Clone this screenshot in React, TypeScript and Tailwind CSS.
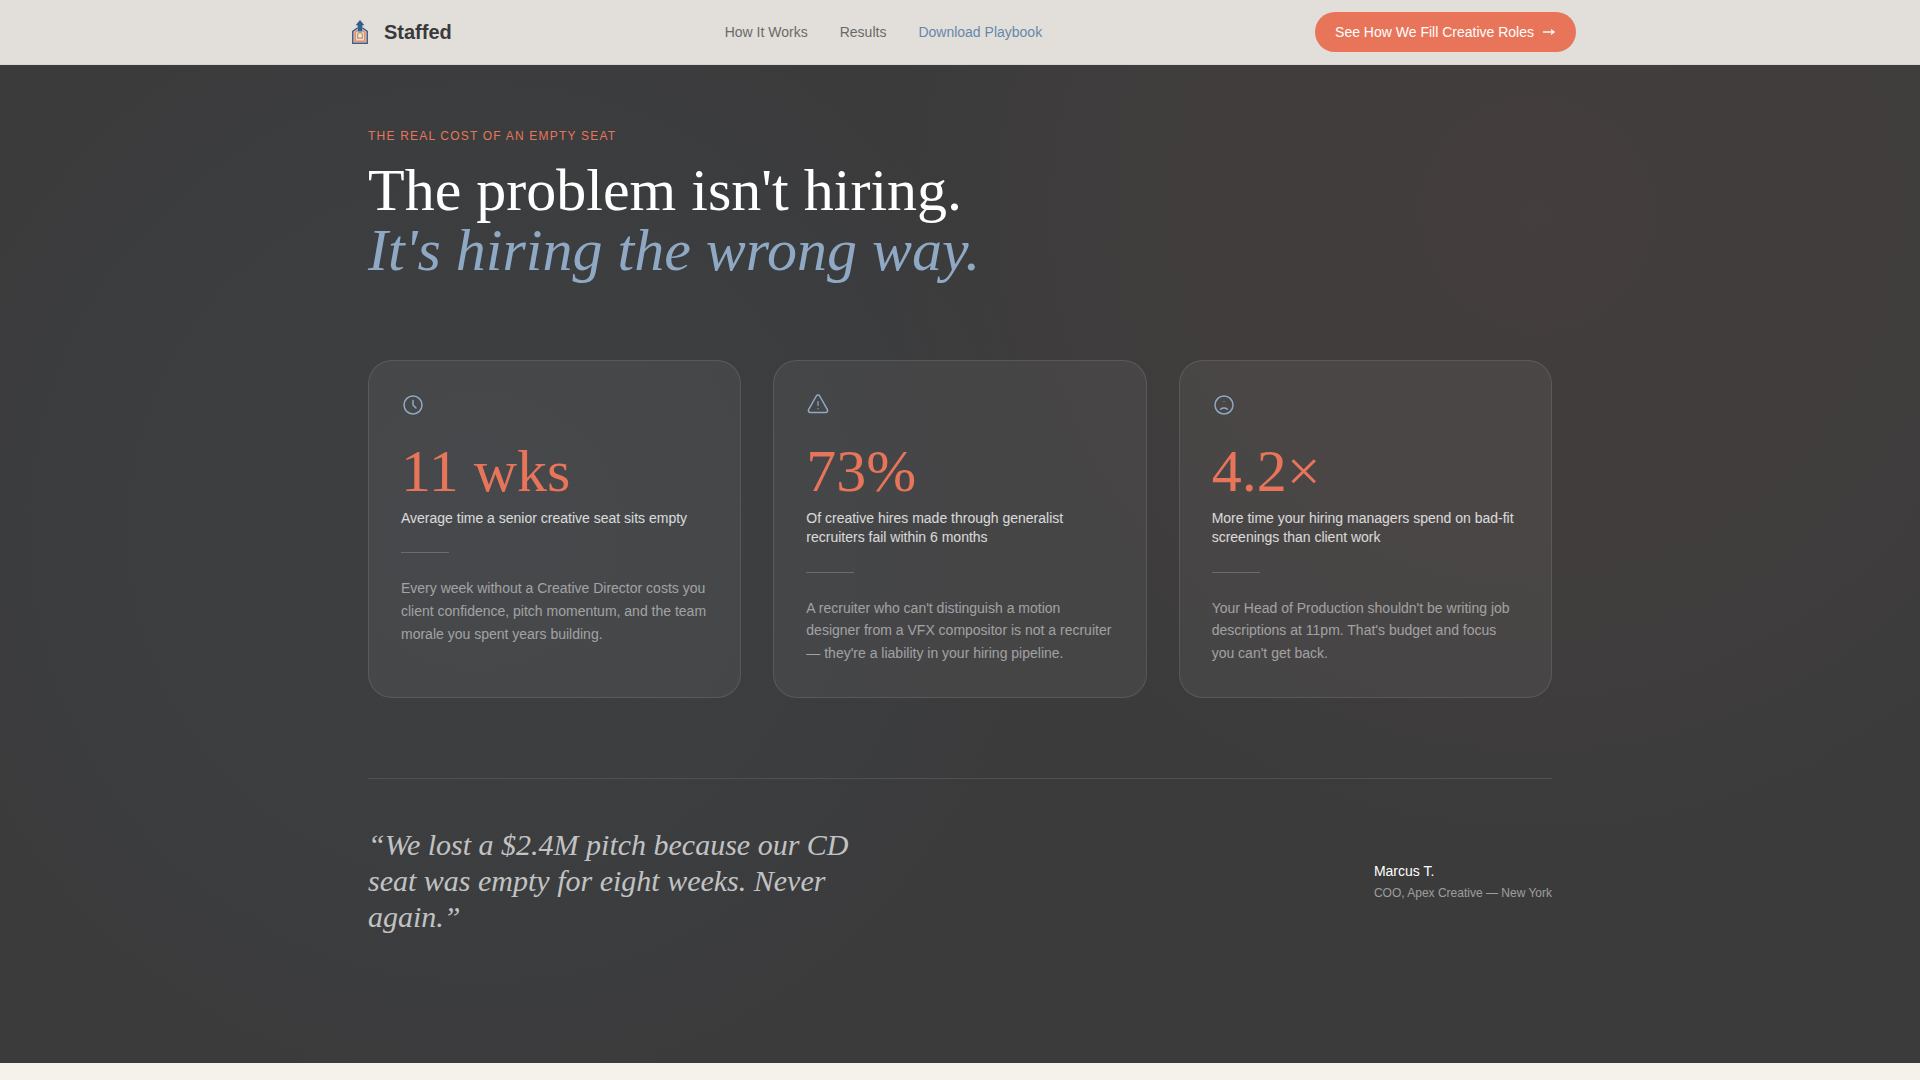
import type { ReactNode } from 'react';

const serif = "font-['Liberation_Serif',serif]";

function Logo() {
  return (
    <svg viewBox="0 0 32 32" className="size-8" aria-hidden="true">
      <path d="M13.4 12 8.8 15.3V27.3h14.4V15.3L18.6 12" fill="none" stroke="#46597a" strokeWidth="1.5" />
      <path d="M13.2 14.6 11.2 16.4v8.8h9.6v-8.8l-2-1.8" fill="none" stroke="#e58a72" strokeWidth="1.6" />
      <path d="M13.6 22.2v-3.9l1.3-1.6h2.2l1.3 1.6v3.9z" fill="#f1e6d6" stroke="#c2955c" strokeWidth="1.2" />
      <path d="M16 4 20.4 9.2h-2v6.2H13.6V9.2h-2z" fill="#33608a" />
    </svg>
  );
}

function StatIcon({ children }: { children: ReactNode }) {
  return (
    <svg
      viewBox="0 0 24 24"
      className="size-6 text-[#8fa9c4]"
      fill="none"
      stroke="currentColor"
      strokeWidth="1.5"
      strokeLinecap="round"
      strokeLinejoin="round"
      aria-hidden="true"
    >
      {children}
    </svg>
  );
}

const stats = [
  {
    value: '11 wks',
    label: 'Average time a senior creative seat sits empty',
    body: 'Every week without a Creative Director costs you client confidence, pitch momentum, and the team morale you spent years building.',
    icon: (
      <>
        <circle cx="12" cy="12" r="9" />
        <path d="M12 7.5V12l3 3" />
      </>
    ),
  },
  {
    value: '73%',
    label: 'Of creative hires made through generalist recruiters fail within 6 months',
    body: "A recruiter who can't distinguish a motion designer from a VFX compositor is not a recruiter — they're a liability in your hiring pipeline.",
    icon: (
      <>
        <path d="M10.3 3 2.6 16.6A1.9 1.9 0 0 0 4.3 19.4h15.4a1.9 1.9 0 0 0 1.7-2.8L13.7 3a2 2 0 0 0-3.4 0z" />
        <path d="M12 8.6v3.8M12 15.7v.1" strokeWidth="1.2" />
      </>
    ),
  },
  {
    value: '4.2×',
    label: 'More time your hiring managers spend on bad-fit screenings than client work',
    body: "Your Head of Production shouldn't be writing job descriptions at 11pm. That's budget and focus you can't get back.",
    icon: (
      <>
        <circle cx="12" cy="12" r="9" />
        <path d="M8.6 16.2c1-.9 2.1-1.2 3.4-1.2s2.4.3 3.4 1.2" />
        <path d="M12 8.6v.1" strokeWidth="1" />
      </>
    ),
  },
];

function Header() {
  return (
    <header className="fixed inset-x-0 top-0 z-10 border-b border-[#d8d5d1] bg-[#e2dfdb]">
      <div className="mx-auto flex h-16 max-w-7xl items-center justify-between px-6">
        <a href="#" className="flex items-center gap-2">
          <Logo />
          <span className="text-xl font-bold text-[#3a3a3a]">Staffed</span>
        </a>
        <nav className="flex items-center gap-8 text-sm text-[#6b6967]">
          <a href="#how">How It Works</a>
          <a href="#results">Results</a>
          <a href="#playbook" className="text-[#6488aa]">Download Playbook</a>
        </nav>
        <button type="button" className="flex h-10 items-center gap-2 rounded-full bg-[#e8755a] px-5 text-sm text-white">
          See How We Fill Creative Roles
          <svg viewBox="0 0 14 14" className="size-3.5" aria-hidden="true">
            <path d="M1 7h10.5" stroke="currentColor" strokeWidth="1.4" />
            <path d="M8.6 3.8 13.2 7 8.6 10.2 9.8 7z" fill="currentColor" />
          </svg>
        </button>
      </div>
    </header>
  );
}

export default function App() {
  return (
    <div className="min-h-screen overflow-hidden bg-[#f5f2ec] font-['Liberation_Sans',Arial,sans-serif]">
      <Header />
      <main className="bg-[#3b3b3c] bg-[radial-gradient(circle_at_80%_20%,rgba(232,117,90,0.05)_0%,rgba(232,117,90,0.035)_18%,transparent_38%),radial-gradient(circle_at_25%_50%,rgba(100,146,180,0.05)_0%,rgba(100,146,180,0.03)_18%,transparent_38%)]">
        <div className="mx-auto max-w-7xl px-12 py-32">
          <p className="text-xs tracking-widest text-[#e8755a] uppercase">The real cost of an empty seat</p>
          <h1 className={`${serif} mt-4 text-6xl leading-none text-white`}>
            The problem isn't hiring.
            <br />
            <em className="text-[#8fa9c4]">It's hiring the wrong way.</em>
          </h1>

          <section className="mt-20 grid grid-cols-3 gap-8">
            {stats.map((s) => (
              <article key={s.value} className="rounded-3xl border border-white/10 bg-white/5 p-8">
                <StatIcon>{s.icon}</StatIcon>
                <p className={`${serif} mt-6 text-6xl leading-none text-[#e8755a]`}>{s.value}</p>
                <h2 className="mt-2 text-sm leading-snug text-white/80">{s.label}</h2>
                <div className="my-6 h-px w-12 bg-white/20" />
                <p className="text-sm leading-relaxed text-white/50">{s.body}</p>
              </article>
            ))}
          </section>

          <section className="mt-20 flex items-center justify-between border-t border-white/10 pt-12">
            <blockquote className={`${serif} max-w-lg text-3xl text-white/70 italic`}>
              “We lost a $2.4M pitch because our CD seat was empty for eight weeks. Never again.”
            </blockquote>
            <div>
              <p className="text-sm text-white">Marcus T.</p>
              <p className="mt-1 text-xs text-white/50">COO, Apex Creative — New York</p>
            </div>
          </section>
        </div>
      </main>
    </div>
  );
}
